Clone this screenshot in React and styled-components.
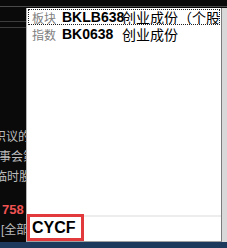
import React from 'react'
import styled, { createGlobalStyle } from 'styled-components'

const GlobalStyle = createGlobalStyle`
  html, body {
    margin: 0;
    padding: 0;
    background: #0a0a0a;
  }
  body {
    width: 227px;
    height: 248px;
    overflow: hidden;
    font-family: "Liberation Sans", "Noto Sans CJK SC", sans-serif;
  }
`

const Screen = styled.div`
  width: 227px;
  height: 248px;
  display: flex;
  flex-direction: column;
  background: #0a0a0a;
`

const TopBand = styled.div`
  flex: none;
  height: 6px;
  border-bottom: 1px solid #4a4a4a;
  margin-bottom: 1px;
`

const Main = styled.div`
  flex: none;
  height: 234px;
  display: flex;
`

const Strip = styled.div`
  width: 26px;
  flex: none;
  display: flex;
  flex-direction: column;
  overflow: hidden;
`

const GridRow = styled.div`
  height: ${props => props.h}px;
  border-bottom: 1px solid #3c3c3c;
`

const StripText = styled.div`
  margin-top: auto;
  padding-bottom: 2px;
  display: flex;
  flex-direction: column;
`

const StripLine = styled.div`
  height: 20px;
  line-height: 20px;
  font-size: ${props => props.bold ? 13 : 12}px;
  font-weight: ${props => props.bold ? 700 : 400};
  font-family: "Liberation Sans", "Noto Sans CJK SC", sans-serif;
  color: ${props => props.color || '#bdbdbd'};
  white-space: nowrap;
  margin-left: ${props => props.shift || 0}px;
`

const Gap = styled.div`
  height: ${props => props.h}px;
`

const Popup = styled.div`
  width: 196px;
  flex: none;
  box-sizing: border-box;
  display: flex;
  flex-direction: column;
  background: #fff;
  border-left: 1px solid #b4b4b4;
  border-right: 1px solid #7c7c7c;
  border-bottom: 1px solid #a0a0a0;
`

const List = styled.div`
  flex: 1;
  padding: 1px 1px 0 1px;
  display: flex;
  flex-direction: column;
`

const Row = styled.div`
  height: ${props => props.active ? 16 : 17}px;
  margin-bottom: ${props => props.active ? 1 : 0}px;
  box-sizing: border-box;
  display: flex;
  align-items: center;
  padding-left: 3px;
  border: 1px dotted ${props => props.active ? '#202020' : 'transparent'};
  overflow: hidden;
`

const Category = styled.span`
  width: 30px;
  flex: none;
  font-family: "Noto Sans CJK SC", sans-serif;
  font-size: 12px;
  line-height: 15px;
  color: #808080;
`

const Code = styled.span`
  width: 60px;
  flex: none;
  font-family: "Liberation Sans", sans-serif;
  font-weight: 700;
  font-size: 14px;
  line-height: 15px;
  color: #000;
`

const Name = styled.span`
  flex: 1;
  min-width: 0;
  overflow: hidden;
  white-space: nowrap;
  font-family: "Noto Sans CJK SC", sans-serif;
  font-size: 14px;
  line-height: 15px;
  color: #000;
`

const InputBar = styled.div`
  flex: none;
  height: 24px;
  border-top: 2px solid #ededed;
  display: flex;
`

const InputBox = styled.div`
  width: 57px;
  height: 27px;
  margin-top: -3px;
  box-sizing: border-box;
  border: 3px solid #e23a3c;
  display: flex;
  align-items: center;
  padding-left: 2px;
  font-family: "Liberation Sans", sans-serif;
  font-weight: 700;
  font-size: 16px;
  color: #000;
`

const Gutter = styled.div`
  flex: 1;
  background: #d9d9d9;
`

const BottomBand = styled.div`
  flex: 1;
  background: #1d3a5c;
`

const items = [
  { cat: '板块', code: 'BKLB638', name: '创业成份（个股份）', active: true },
  { cat: '指数', code: 'BK0638', name: '创业成份' }
]

export default function App () {
  return (
    <Screen>
      <GlobalStyle />
      <TopBand />
      <Main>
        <Strip>
          <GridRow h={13} />
          <GridRow h={5} />
          <StripText>
            <StripLine shift={-6}>识议的公告</StripLine>
            <StripLine shift={-1}>事会第</StripLine>
            <StripLine shift={-5}>临时股东</StripLine>
            <Gap h={13} />
            <StripLine bold color='#f05252' shift={2}>758</StripLine>
            <StripLine shift={1}>[全部</StripLine>
          </StripText>
        </Strip>
        <Popup>
          <List>
            {items.map(item => (
              <Row key={item.code} active={item.active}>
                <Category>{item.cat}</Category>
                <Code>{item.code}</Code>
                <Name>{item.name}</Name>
              </Row>
            ))}
          </List>
          <InputBar>
            <InputBox>CYCF</InputBox>
          </InputBar>
        </Popup>
        <Gutter />
      </Main>
      <BottomBand />
    </Screen>
  )
}
